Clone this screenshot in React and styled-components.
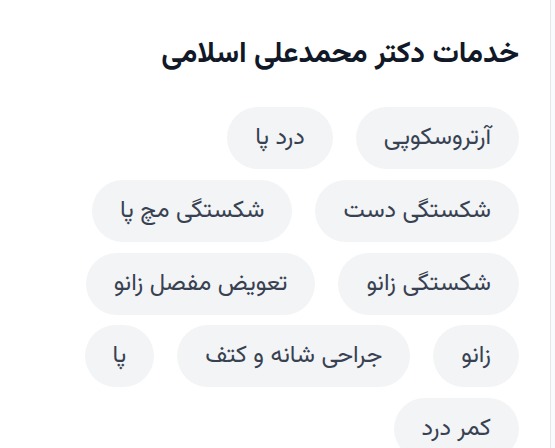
import React from 'react';
import styled, { createGlobalStyle } from 'styled-components';

const GlobalStyle = createGlobalStyle`
  html, body {
    margin: 0;
    padding: 0;
    background: #f9fafb;
    overflow: hidden;
  }
  body {
    font-family: "Vazirmatn", "Noto Sans Arabic", "DejaVu Sans", sans-serif;
  }
`;

const Card = styled.section`
  direction: rtl;
  background: #ffffff;
  border: 1px solid #e5e7eb;
  margin: -20px 4px 0 -20px;
  padding: 56px 31px 40px 40px;
  height: 520px;
`;

const Title = styled.h2`
  margin: 0 0 34px 0;
  font-size: 29.5px;
  line-height: 36px;
  font-weight: 700;
  color: #111827;
`;

const Tags = styled.div`
  display: flex;
  flex-wrap: wrap;
  gap: 10.75px 23px;
`;

const Tag = styled.span`
  display: inline-flex;
  align-items: center;
  height: 62px;
  padding: 0 28px;
  border-radius: 999px;
  background: #f3f4f6;
  color: #374151;
  font-size: 24px;
  box-sizing: border-box;
  white-space: nowrap;
`;

const services = [
  'آرتروسکوپی',
  'درد پا',
  'شکستگی دست',
  'شکستگی مچ پا',
  'شکستگی زانو',
  'تعویض مفصل زانو',
  'زانو',
  'جراحی شانه و کتف',
  'پا',
  'کمر درد',
];

export default function App() {
  return (
    <>
      <GlobalStyle />
      <Card>
        <Title>خدمات دکتر محمدعلی اسلامی</Title>
        <Tags>
          {services.map((s) => (
            <Tag key={s}>{s}</Tag>
          ))}
        </Tags>
      </Card>
    </>
  );
}
